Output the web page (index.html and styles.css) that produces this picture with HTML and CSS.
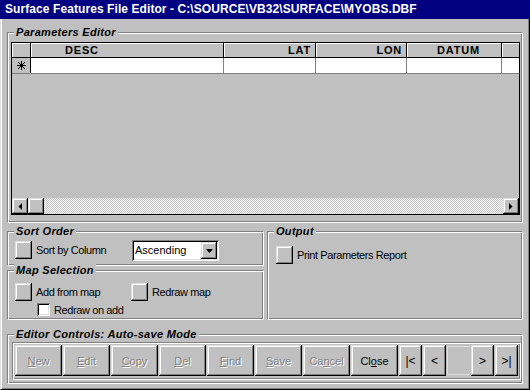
FILE: index.html
```html
<!DOCTYPE html>
<html>
<head>
<meta charset="utf-8">
<link rel="stylesheet" href="styles.css">
</head>
<body>
<div class="window">
  <div class="titlebar">Surface Features File Editor - C:\SOURCE\VB32\SURFACE\MYOBS.DBF</div>
  <div class="client">
    <div class="frame params">
      <div class="frame-label">Parameters Editor</div>
      <div class="grid">
        <div class="grid-row head">
          <div class="cell c-sel"></div>
          <div class="cell c-desc">DESC</div>
          <div class="cell c-lat">LAT</div>
          <div class="cell c-lon">LON</div>
          <div class="cell c-datum">DATUM</div>
          <div class="cell c-extra"></div>
        </div>
        <div class="grid-row data">
          <div class="cell c-sel"><svg width="9" height="9" viewBox="0 0 9 9"><path d="M4.5 0V9M0 4.5H9M1 1L8 8M8 1L1 8" stroke="#000" stroke-width="1" fill="none" shape-rendering="crispEdges"/></svg></div>
          <div class="cell c-desc"></div>
          <div class="cell c-lat"></div>
          <div class="cell c-lon"></div>
          <div class="cell c-datum"></div>
          <div class="cell c-extra"></div>
        </div>
        <div class="grid-space"></div>
        <div class="hscroll">
          <div class="sbtn btn3d"><svg width="4" height="7" viewBox="0 0 4 7"><path d="M4 0V7L0.5 3.5Z" fill="#000"/></svg></div>
          <div class="sbtn btn3d"></div>
          <div class="track"></div>
          <div class="sbtn btn3d"><svg width="4" height="7" viewBox="0 0 4 7"><path d="M0 0V7L3.5 3.5Z" fill="#000"/></svg></div>
        </div>
      </div>
    </div>

    <div class="middle">
      <div class="leftcol">
        <div class="frame sort">
          <div class="frame-label">Sort Order</div>
          <div class="sort-row">
            <div class="opt w-sort"><span class="sq btn3d"></span><span class="lbl">Sort by Column</span></div>
            <div class="combo">
              <span class="combo-text">Ascending</span>
              <span class="combo-btn btn3d"><svg width="7" height="4" viewBox="0 0 7 4"><path d="M0 0H7L3.5 4Z" fill="#000"/></svg></span>
            </div>
          </div>
        </div>
        <div class="frame map">
          <div class="frame-label">Map Selection</div>
          <div class="map-row">
            <div class="opt w-map"><span class="sq btn3d"></span><span class="lbl">Add from map</span></div>
            <div class="opt"><span class="sq btn3d"></span><span class="lbl">Redraw map</span></div>
          </div>
          <div class="check-row">
            <span class="checkbox"></span><span class="lbl">Redraw on add</span>
          </div>
        </div>
      </div>
      <div class="frame output">
        <div class="frame-label">Output</div>
        <div class="out-row opt"><span class="sq btn3d"></span><span class="lbl">Print Parameters Report</span></div>
      </div>
    </div>

    <div class="frame controls">
      <div class="frame-label">Editor Controls: Auto-save Mode</div>
      <div class="btnbox">
        <div class="cmd btn3d disabled"><u>N</u>ew</div>
        <div class="cmd btn3d disabled"><u>E</u>dit</div>
        <div class="cmd btn3d disabled"><u>C</u>opy</div>
        <div class="cmd btn3d disabled"><u>D</u>el</div>
        <div class="cmd btn3d disabled"><u>F</u>ind</div>
        <div class="cmd btn3d disabled"><u>S</u>ave</div>
        <div class="cmd btn3d disabled">Ca<u>n</u>cel</div>
        <div class="cmd btn3d">Cl<u>o</u>se</div>
        <div class="nav btn3d">|&lt;</div>
        <div class="nav btn3d">&lt;</div>
        <div class="nav blank"></div>
        <div class="nav btn3d">&gt;</div>
        <div class="nav btn3d">&gt;|</div>
      </div>
    </div>
  </div>
</div>
</body>
</html>
```

FILE: styles.css
```css
* { box-sizing: border-box; }

body {
  margin: 0;
  background: #c0c0c0;
  font-family: "Liberation Sans", Arial, sans-serif;
  font-size: 11px;
  color: #000;
}

.window {
  width: 530px;
  height: 390px;
  display: flex;
  flex-direction: column;
  background: #c0c0c0;
}

.titlebar {
  height: 19px;
  background: #000080;
  color: #fff;
  font-weight: bold;
  font-size: 12px;
  line-height: 19px;
  padding-left: 5px;
  white-space: nowrap;
  letter-spacing: 0.08px;
}

.client {
  flex: 1;
  border-left: 1px solid #dfdfdf;
  border-right: 1px solid #000;
  border-bottom: 1px solid #000;
  box-shadow: inset 1px 0 #fff, inset -1px -1px #808080;
  padding: 13px 6px 5px 6px;
  display: flex;
  flex-direction: column;
}

/* etched frame */
.frame {
  border: 1px solid;
  border-color: #808080 #fff #fff #808080;
  box-shadow: inset 1px 1px #fff, inset -1px -1px #808080;
}

.frame-label {
  width: max-content;
  margin: -7px 0 0 6px;
  padding: 0 2px;
  background: #c0c0c0;
  font-style: italic;
  font-weight: bold;
  font-size: 11px;
  line-height: 13px;
  letter-spacing: 0.3px;
}

/* grid */
.grid {
  margin: 3px 2px 7px 3px;
  height: 173px;
  border: 1px solid #000;
  display: flex;
  flex-direction: column;
  background: #c0c0c0;
}

.grid-row { display: flex; }

.head {
  height: 15px;
  border-bottom: 1px solid #000;
}

.head .cell {
  height: 14px;
  border-right: 1px solid #000;
  box-shadow: inset 1px 1px #fff;
  font-weight: bold;
  font-size: 11px;
  line-height: 14px;
  letter-spacing: 0.8px;
  white-space: nowrap;
}

.data {
  height: 16px;
  border-bottom: 1px solid #808080;
  background: #fff;
}

.data .cell {
  height: 15px;
  border-right: 1px solid #808080;
}

.data .c-sel {
  background: #c0c0c0;
  border-right-color: #000;
  display: flex;
  align-items: center;
  justify-content: center;
}

.c-sel { width: 19px; }
.c-desc { width: 193px; padding-left: 34px; }
.c-lat { width: 92px; text-align: right; padding-right: 4px; }
.c-lon { width: 91px; text-align: right; padding-right: 4px; }
.c-datum { width: 95px; padding-left: 30px; }
.grid-row .c-extra { width: 17px; border-right: 0; }

.grid-space { flex: 1; }

.hscroll {
  height: 16px;
  display: flex;
}

.sbtn {
  width: 16px;
  height: 16px;
  display: flex;
  align-items: center;
  justify-content: center;
}

.track {
  flex: 1;
  background-color: #c0c0c0;
  background-image: conic-gradient(#fff 0 25%, #c0c0c0 0 50%, #fff 0 75%, #c0c0c0 0);
  background-size: 2px 2px;
}

/* 3d controls */
.btn3d {
  background: #c0c0c0;
  box-shadow: inset -1px -1px #000, inset 1px 1px #dfdfdf, inset -2px -2px #808080, inset 2px 2px #fff;
}

/* middle */
.middle {
  margin-top: 8px;
  display: flex;
  gap: 3px;
}

.leftcol {
  width: 257px;
  display: flex;
  flex-direction: column;
  gap: 4px;
}

.output { flex: 1; }

.opt {
  display: flex;
  align-items: center;
}

.sq {
  width: 17px;
  height: 18px;
  flex: none;
}

.lbl {
  margin-left: 4px;
  letter-spacing: -0.4px;
  white-space: nowrap;
}

.sort-row {
  display: flex;
  align-items: flex-start;
  margin: 2px 0 4px 7px;
  height: 21px;
}

.w-sort { width: 117px; margin-top: 1px; }

.combo {
  width: 87px;
  height: 21px;
  background: #fff;
  box-shadow: inset 1px 1px #808080, inset -1px -1px #fff, inset 2px 2px #000, inset -2px -2px #dfdfdf;
  padding: 2px;
  display: flex;
}

.combo-text {
  flex: 1;
  padding-left: 1px;
  line-height: 17px;
  font-size: 11px;
}

.combo-btn {
  width: 16px;
  height: 17px;
  display: flex;
  align-items: center;
  justify-content: center;
}

.map-row {
  display: flex;
  margin: 6px 0 0 7px;
}

.w-map { width: 116px; }

.check-row {
  display: flex;
  align-items: center;
  margin: 2px 0 3px 29px;
  height: 13px;
}

.checkbox {
  width: 13px;
  height: 13px;
  background: #fff;
  box-shadow: inset 1px 1px #808080, inset -1px -1px #fff, inset 2px 2px #000, inset -2px -2px #dfdfdf;
}

.out-row {
  margin: 8px 0 0 8px;
}

/* controls */
.controls { margin-top: 14px; }

.btnbox {
  margin: 1px 1px 3px 4px;
  border: 1px solid;
  border-color: #808080 #fff #fff #808080;
  box-shadow: inset 1px 1px #fff, inset -1px -1px #808080;
  padding: 2px 2px 3px 2px;
  display: flex;
  gap: 1px;
}

.cmd, .nav {
  height: 31px;
  display: flex;
  align-items: center;
  justify-content: center;
  font-size: 11px;
  white-space: nowrap;
}

.cmd { width: 47px; }
.nav { width: 23px; font-size: 12px; }

.disabled {
  color: #808080;
  text-shadow: 1px 1px 0 #fff;
}

.blank {
  margin-top: 1px;
  height: 29px;
  border-top: 1px solid #dfdfdf;
  border-left: 1px solid #dfdfdf;
  border-bottom: 1px solid #dfdfdf;
}
```
